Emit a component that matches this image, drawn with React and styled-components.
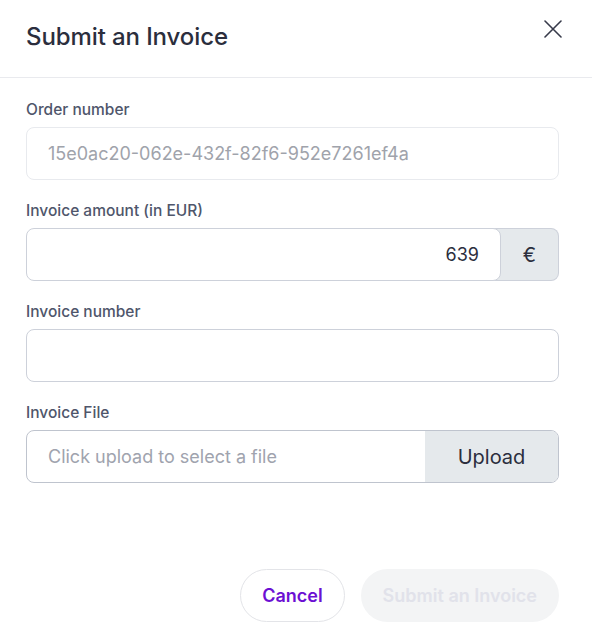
import styled, { createGlobalStyle } from 'styled-components'

const GlobalStyle = createGlobalStyle`
  html, body {
    margin: 0;
    padding: 0;
    background: #ffffff;
  }
  body {
    font-family: Inter, "Noto Sans", sans-serif;
    -webkit-font-smoothing: antialiased;
  }
  * { box-sizing: border-box; }
`

function CloseIcon () {
  return (
    <svg width='18' height='18' viewBox='0 0 18 18' fill='none'>
      <path d='M1 1L17 17M17 1L1 17' stroke='#373a4a' strokeWidth='1.6' strokeLinecap='round' />
    </svg>
  )
}

function App () {
  return (
    <>
      <GlobalStyle />
      <Modal>
        <Header>
          <Title>Submit an Invoice</Title>
          <CloseButton aria-label='Close'>
            <CloseIcon />
          </CloseButton>
        </Header>

        <Body>
          <Field>
            <Label>Order number</Label>
            <Input $disabled readOnly value='15e0ac20-062e-432f-82f6-952e7261ef4a' />
          </Field>

          <Field>
            <Label>Invoice amount (in EUR)</Label>
            <Group>
              <Input $align='right' readOnly value='639' />
              <Addon>€</Addon>
            </Group>
          </Field>

          <Field>
            <Label>Invoice number</Label>
            <Input readOnly value='' />
          </Field>

          <Field>
            <Label>Invoice File</Label>
            <FileBox>
              <FileHint>Click upload to select a file</FileHint>
              <UploadButton>Upload</UploadButton>
            </FileBox>
          </Field>
        </Body>

        <Footer>
          <Button $variant='ghost'>Cancel</Button>
          <Button $variant='disabled' disabled>Submit an Invoice</Button>
        </Footer>
      </Modal>
    </>
  )
}

const Modal = styled.div`
  width: 592px;
  height: 642px;
  background: #ffffff;
  display: flex;
  flex-direction: column;
`

const Header = styled.header`
  display: flex;
  justify-content: space-between;
  align-items: flex-start;
  padding: 21px 30px 24px 26px;
  border-bottom: 1px solid #e9eaee;
`

const Title = styled.h2`
  margin: 0;
  font-size: 24px;
  line-height: 32px;
  font-weight: 500;
  color: #2b2e3d;
  letter-spacing: -0.1px;
`

const CloseButton = styled.button`
  border: 0;
  background: none;
  padding: 0;
  margin-top: -1px;
  display: flex;
  cursor: pointer;
`

const Body = styled.div`
  display: flex;
  flex-direction: column;
  gap: 21px;
  padding: 22px 33px 0 26px;
`

const Field = styled.div`
  display: flex;
  flex-direction: column;
  gap: 7px;
`

const Label = styled.label`
  font-size: 15.5px;
  line-height: 20px;
  font-weight: 500;
  color: #4f566b;
`

const Input = styled.input`
  width: 100%;
  min-width: 0;
  height: 53px;
  border: 1px solid ${p => (p.$disabled ? '#e8eaee' : '#cdd1da')};
  border-radius: 8px;
  padding: 0 21px;
  font-family: inherit;
  font-size: 18px;
  color: ${p => (p.$disabled ? '#a0a3ab' : '#2b2e3d')};
  background: #ffffff;
  text-align: ${p => p.$align || 'left'};
  outline: none;
  position: relative;
  z-index: 1;
`

const Group = styled.div`
  display: flex;

  ${Input} {
    flex: 1;
  }
`

const Addon = styled.div`
  width: 66px;
  margin-left: -8px;
  padding-left: 8px;
  height: 53px;
  display: flex;
  align-items: center;
  justify-content: center;
  background: #e5e9ec;
  border: 1px solid #cdd1da;
  border-left: 0;
  border-radius: 0 8px 8px 0;
  font-size: 20px;
  color: #2b2e3d;
`

const FileBox = styled.div`
  display: flex;
  height: 53px;
  border: 1px solid #bfc4ce;
  border-radius: 8px;
  overflow: hidden;
`

const FileHint = styled.div`
  flex: 1;
  display: flex;
  align-items: center;
  padding: 0 21px;
  font-size: 18px;
  color: #a0a3ae;
`

const UploadButton = styled.button`
  width: 133px;
  border: 0;
  background: #e5e9ec;
  font-family: inherit;
  font-size: 20px;
  color: #2b2e3d;
  cursor: pointer;
`

const Footer = styled.footer`
  margin-top: auto;
  display: flex;
  justify-content: flex-end;
  gap: 16px;
  padding: 0 33px 20px 26px;
`

const Button = styled.button`
  height: 53px;
  border-radius: 27px;
  padding: 0 21px;
  font-family: inherit;
  font-size: 18px;
  font-weight: 600;
  border: 1px solid ${p => (p.$variant === 'ghost' ? '#e3e4e8' : 'transparent')};
  background: ${p => (p.$variant === 'ghost' ? '#ffffff' : '#f3f4f5')};
  color: ${p => (p.$variant === 'ghost' ? '#6c0fd3' : '#e1e2ea')};
  cursor: ${p => (p.$variant === 'disabled' ? 'default' : 'pointer')};
`

export default App
